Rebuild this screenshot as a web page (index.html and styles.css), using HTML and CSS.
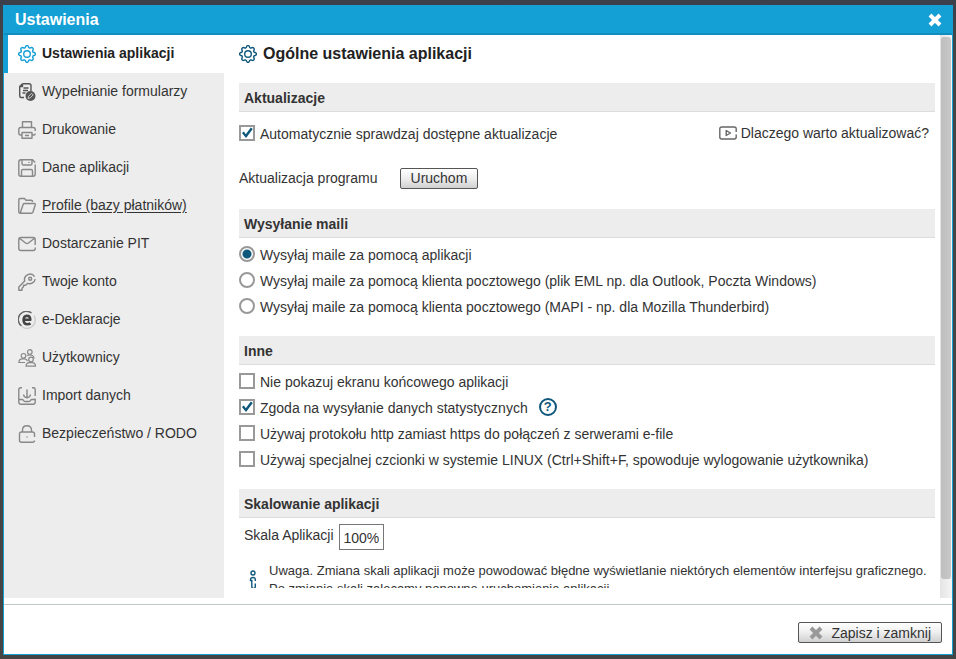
FILE: index.html
```
<!DOCTYPE html>
<html lang="pl">
<head>
  <meta charset="UTF-8">
  <title>Ustawienia</title>
  <link rel="stylesheet" href="styles.css">
</head>
<body>
  <div class="dialog">
    <header class="titlebar">
      <h1>Ustawienia</h1>
      <button class="close" type="button" aria-label="Zamknij">
        <svg class="cross" viewBox="0 0 14 14"><path d="M2 2l10 10M12 2L2 12"/></svg>
      </button>
    </header>

    <div class="main">
      <nav class="sidebar">
        <a href="#" class="active">
          <svg class="icon" viewBox="0 0 18 18"><path d="M7.3 2.7Q7.5.6 9 .6t1.7 2.1l1.2.5q1.7-1.2 2.8-.1t-.1 2.8l.5 1.4q2.3.2 2.3 1.7t-2.3 1.7l-.5 1.4q1.2 1.7.1 2.8t-2.8-.1l-1.2.5q-.2 2.1-1.7 2.1t-1.7-2.1l-1.2-.5q-1.7 1.2-2.8.1t.1-2.8l-.5-1.4Q.6 10.500.6 9t2.300-1.700l.5-1.400q-1.200-1.700-.1-2.800t2.800.1z"/><circle cx="9" cy="9" r="3.300"/></svg>
          Ustawienia aplikacji
        </a>
        <a href="#">
          <svg class="icon dark" viewBox="0 0 18 18"><path d="M4.500.7H11q2 0 2 2V8M4.500.7L1.700 3.500V13q0 1.500 1.500 1.500H6M4.500.7v2.800H1.700M5.500 5h5M5 7.500h5M4.500 10h3"/><circle class="solid" cx="12.500" cy="13" r="5"/><path class="light" d="M10 15.500l.6-2.200 3-3 1.600 1.600-3 3z"/></svg>
          Wypełnianie formularzy
        </a>
        <a href="#">
          <svg class="icon" viewBox="0 0 18 18"><path d="M4.500 6.500V.8h9v5.700M4 14H2.500Q.8 14 .8 12.300V8.500q0-2 2-2h12.400q2 0 2 2V10M17.200 12.500q0 1.500-1.500 1.500H14M4 11.500h10v5.700H4zM7 14.500h4"/></svg>
          Drukowanie
        </a>
        <a href="#">
          <svg class="icon" viewBox="0 0 18 18"><path d="M17.200 5.500V15q0 2.200-2.200 2.200H3Q.8 17.200.8 15V3Q.8.8 3 .8h11.500l2.700 2.700M4 1v3.500q0 1.500 1.500 1.500h7Q14 6 14 4.500V1M11 3v1M3.500 17v-5q0-1.500 1.500-1.500h8q1.500 0 1.500 1.500v5"/></svg>
          Dane aplikacji
        </a>
        <a href="#" class="underlined">
          <svg class="icon" viewBox="0 0 18 18"><path d="M14.500 5V4.500q0-1.300-1.300-1.300H8L6.500 1.500H2Q.8 1.500.8 2.800v12q0 1.500 1.500 1.500h11.200q1 0 1.400-1L17.200 8q.4-1.500-1-1.500H6.500q-1 0-1.400 1L2.300 16"/></svg>
          Profile (bazy płatników)
        </a>
        <a href="#">
          <svg class="icon" viewBox="0 0 18 18"><path d="M17.200 10V4.500q0-2-2-2H2.800q-2 0-2 2v9q0 2 2 2h12.400q2 0 2-2V12.500M1.500 3.200L7.500 8q1.500 1 3 0l6-4.800"/></svg>
          Dostarczanie PIT
        </a>
        <a href="#">
          <svg class="icon" viewBox="0 0 18 18"><path d="M16.600 3.600A5.500 5.500 0 0 0 6.700 8L.8 14v3.200H4v-2l1.500-1.500v-1.500h2l2.200-1.900a5.500 5.500 0 0 0 7.500-4.300"/><circle cx="12.200" cy="5.800" r="1.500"/></svg>
          Twoje konto
        </a>
        <a href="#">
          <svg class="icon edek" viewBox="0 0 18 18"><path class="ring" d="M16 4.500Q17.200 6.500 17.200 9a8.200 8.200 0 0 1-13 6.700"/><path d="M13.500 2A8.200 8.200 0 0 0 3.500 15"/><path class="letter" d="M5.800 8.800h6.500Q12.200 4.700 9 4.700 5.600 4.900 5.600 9q0 4.300 3.900 4.300 1.800 0 3-.9"/></svg>
          e-Deklaracje
        </a>
        <a href="#">
          <svg class="icon thin" viewBox="0 0 18 18"><circle cx="11.800" cy="3" r="2.300"/><circle cx="5.500" cy="6.800" r="2.300"/><circle cx="13" cy="10.500" r="2.300"/><path d="M9 6.500Q10 6 11.800 6q3.900 0 4.400 3.500M7 13.500H.8Q1 10 4.500 9.900h2Q8.800 10 9.500 12M8 17.200q.2-3.500 3.500-3.600h2.700q3.200.1 3.400 3.600z"/></svg>
          Użytkownicy
        </a>
        <a href="#">
          <svg class="icon" viewBox="0 0 18 18"><path d="M4 .8H2.500Q.8.8.8 2.500V15q0 2.200 2.200 2.200h12q2.200 0 2.200-2.200V11.500M14 .8h1.500q1.700 0 1.700 1.700V9M1 12.500h3q1 0 1.500 1t1.500 1h4q1 0 1.500-1t1.500-1h3M9 2.500v8M5.500 7.500Q6 10.700 9 10.700t3.500-3.200"/></svg>
          Import danych
        </a>
        <a href="#">
          <svg class="icon" viewBox="0 0 18 18"><path d="M4.500 7V5.200Q4.500.8 9 .8t4.500 4.400V7M16.500 12V9q0-2-2-2h-11q-2 0-2 2v6.200q0 2 2 2h11q2 0 2-1.700M8.500 12h1"/></svg>
          Bezpieczeństwo / RODO
        </a>
      </nav>

      <div class="pane">
        <h2>
          <svg class="icon" viewBox="0 0 18 18"><path d="M7.3 2.7Q7.5.6 9 .6t1.7 2.1l1.2.5q1.7-1.2 2.8-.1t-.1 2.8l.5 1.4q2.3.2 2.3 1.7t-2.3 1.7l-.5 1.4q1.2 1.7.1 2.8t-2.8-.1l-1.2.5q-.2 2.1-1.7 2.1t-1.7-2.1l-1.2-.5q-1.7 1.2-2.8.1t.1-2.8l-.5-1.4Q.6 10.500.6 9t2.300-1.700l.5-1.400q-1.200-1.700-.1-2.800t2.800.1z"/><circle cx="9" cy="9" r="3.300"/></svg>
          Ogólne ustawienia aplikacji
        </h2>

        <section class="updates">
          <h3>Aktualizacje</h3>
          <div class="row">
            <label><input type="checkbox" checked>Automatycznie sprawdzaj dostępne aktualizacje</label>
            <a href="#" class="why">
              <svg class="icon video" viewBox="0 0 18 18"><path d="M17.200 8V5q0-2-2-2H2.800q-2 0-2 2v8q0 2 2 2h12.400q2 0 2-2v-2.500M7.200 6.500v5l4.300-2.500z"/></svg>
              Dlaczego warto aktualizować?
            </a>
          </div>
          <div class="row run">
            <span>Aktualizacja programu</span>
            <button class="btn" type="button">Uruchom</button>
          </div>
        </section>

        <section>
          <h3>Wysyłanie maili</h3>
          <div class="row"><label><input type="radio" name="mail" checked>Wysyłaj maile za pomocą aplikacji</label></div>
          <div class="row"><label><input type="radio" name="mail">Wysyłaj maile za pomocą klienta pocztowego (plik EML np. dla Outlook, Poczta Windows)</label></div>
          <div class="row"><label><input type="radio" name="mail">Wysyłaj maile za pomocą klienta pocztowego (MAPI - np. dla Mozilla Thunderbird)</label></div>
        </section>

        <section>
          <h3>Inne</h3>
          <div class="row"><label><input type="checkbox">Nie pokazuj ekranu końcowego aplikacji</label></div>
          <div class="row">
            <label><input type="checkbox" checked>Zgoda na wysyłanie danych statystycznych</label>
            <button class="help" type="button">?</button>
          </div>
          <div class="row"><label><input type="checkbox">Używaj protokołu http zamiast https do połączeń z serwerami e-file</label></div>
          <div class="row"><label><input type="checkbox">Używaj specjalnej czcionki w systemie LINUX (Ctrl+Shift+F, spowoduje wylogowanie użytkownika)</label></div>
        </section>

        <section>
          <h3>Skalowanie aplikacji</h3>
          <div class="scale">
            <label for="scale">Skala Aplikacji</label>
            <select id="scale">
              <option>100%</option>
            </select>
          </div>
          <div class="note">
            <svg class="info" viewBox="0 0 8 20"><circle cx="4" cy="3" r="2"/><path d="M6.300 11V9.500Q6.300 7.500 4 7.500T1.500 9.500v1h1.300v6q0 2 1.700 2t1.800-2v-3"/></svg>
            <p>Uwaga. Zmiana skali aplikacji może powodować błędne wyświetlanie niektórych elementów interfejsu graficznego.<br>Po zmianie skali zalecamy ponowne uruchomienie aplikacji.</p>
          </div>
        </section>
      </div>

      <div class="scrollbar"><div class="thumb"></div></div>
    </div>

    <footer class="footer">
      <button class="btn save" type="button">
        <svg class="cross" viewBox="0 0 14 14"><path d="M2 2l10 10M12 2L2 12"/></svg>
        Zapisz i zamknij
      </button>
    </footer>
  </div>
</body>
</html>
```
FILE: styles.css
```
* {
  box-sizing: border-box;
}

body {
  margin: 0;
  height: 100vh;
  padding: 5px 3px 4px;
  background: linear-gradient(#3c404b, #444 40px);
  font-family: "Liberation Sans", Arial, sans-serif;
  font-size: 14px;
  line-height: 18px;
  color: #333;
}

h1, h2, h3, p {
  margin: 0;
}

a {
  color: inherit;
  text-decoration: none;
}

.dialog {
  display: flex;
  flex-direction: column;
  height: 100%;
  background: #fff;
  border: 1px solid #149fd5;
  border-top: none;
}

/* title bar */
.titlebar {
  display: flex;
  align-items: center;
  justify-content: space-between;
  height: 30px;
  flex: none;
  padding: 2px 10px 0 11px;
  background: #149fd5;
  border-bottom: 2px solid #118cbe;
  color: #fff;
}

.titlebar h1 {
  font-size: 16px;
}

.close {
  padding: 0;
  border: none;
  background: none;
  line-height: 0;
  color: #fff;
}

.cross {
  width: 14px;
  height: 14px;
  fill: none;
  stroke: currentColor;
  stroke-width: 4;
}

.main {
  display: flex;
  flex: 1;
  min-height: 0;
}

/* icons */
.icon {
  flex: none;
  width: 18px;
  height: 18px;
  fill: none;
  stroke: #888;
  stroke-width: 1.4;
  stroke-linejoin: round;
}

.icon.thin {
  stroke-width: 1.2;
}

.icon.dark {
  stroke: #555;
}

.icon .solid {
  fill: #555;
  stroke: none;
}

.icon .light {
  stroke: #ccc;
  stroke-width: 1;
}

.edek {
  stroke: #666;
}

.edek .ring {
  stroke: #ccc;
}

.edek .letter {
  stroke: #444;
  stroke-width: 2.6;
}

/* sidebar */
.sidebar {
  width: 220px;
  flex: none;
  background: #ededed;
}

.sidebar a {
  display: flex;
  align-items: center;
  gap: 6px;
  height: 38px;
  padding: 0 0 2px 14px;
}

.sidebar .icon {
  margin-top: 2px;
}

.sidebar .active {
  padding-left: 10px;
  border-left: 4px solid #149fd5;
  background: #fff;
  font-weight: bold;
  color: #222;
}

.sidebar .active .icon {
  stroke: #149fd5;
}

.sidebar .underlined {
  text-decoration: underline;
  text-underline-offset: 2px;
}

/* settings */
.pane {
  flex: 1;
  min-width: 0;
  overflow: hidden;
  margin: 0 5px 10px 15px;
}

.pane h2 {
  display: flex;
  align-items: center;
  gap: 6px;
  height: 38px;
  margin-bottom: 10px;
  font-size: 16px;
  color: #222;
}

.pane h2 .icon {
  stroke: #0f587c;
}

section {
  margin-bottom: 17px;
}

h3 {
  height: 29px;
  margin-bottom: 3px;
  padding-left: 5px;
  border-bottom: 1px solid #ddd;
  background: #ededed;
  font-size: 14px;
  line-height: 30px;
}

.row {
  display: flex;
  align-items: center;
  height: 26px;
}

.row label {
  display: flex;
  align-items: flex-start;
  gap: 5px;
  height: 16px;
  line-height: 18px;
}

.updates .row {
  height: 36px;
}

.updates .run {
  height: 54px;
  gap: 22px;
}

.updates {
  margin-bottom: 4px;
}

.why {
  display: flex;
  align-items: center;
  gap: 4px;
  margin-left: auto;
  padding-right: 6px;
}

.video {
  stroke: #666;
}

input {
  appearance: none;
  flex: none;
  width: 16px;
  height: 16px;
  margin: 0;
  border: 2px solid #999;
  background: #fff;
}

input[type="radio"] {
  border-radius: 50%;
}

input[type="radio"]:checked {
  background: radial-gradient(circle, #0f587c 4px, #fff 5px);
}

input[type="checkbox"]:checked::before {
  content: "";
  display: block;
  width: 12px;
  height: 12px;
  background: #0f587c;
  clip-path: polygon(8% 50%, 24% 38%, 40% 60%, 82% 4%, 98% 16%, 42% 92%);
}

.help {
  width: 18px;
  height: 18px;
  margin-left: 11px;
  padding: 0;
  border: 2px solid #0f587c;
  border-radius: 50%;
  background: none;
  font: bold 13px/14px "Liberation Sans", Arial, sans-serif;
  color: #0f587c;
}

.btn {
  height: 21px;
  padding: 0 10px;
  border: 1px solid #555;
  border-radius: 2px;
  background: linear-gradient(#fff, #eee 50%, #d0d0d0);
  font: 14px/18px "Liberation Sans", Arial, sans-serif;
  color: #333;
}

.scale {
  display: flex;
  align-items: flex-start;
  gap: 5px;
  padding: 3px 0 0 5px;
}

.scale label {
  padding-top: 2px;
}

.scale select {
  appearance: none;
  width: 45px;
  height: 26px;
  padding: 2px 4px 0;
  border: 1px solid #777;
  border-radius: 0;
  background: #fff;
  font: inherit;
  color: #333;
}

.note {
  display: flex;
  gap: 12px;
  margin-top: 12px;
  padding-left: 10px;
  font-size: 13px;
  white-space: nowrap;
}

.info {
  flex: none;
  width: 8px;
  height: 20px;
  margin-top: 8px;
  fill: none;
  stroke: #0f587c;
  stroke-width: 1.4;
}

.scrollbar {
  width: 12px;
  flex: none;
  padding: 2px 1px 19px;
  background: linear-gradient(90deg, #e4e4e4, #f5f5f5);
}

.thumb {
  height: 100%;
  border-radius: 3px;
  background: linear-gradient(90deg, #bebebe, #c8c8c8);
}

.footer {
  display: flex;
  align-items: center;
  justify-content: flex-end;
  flex: none;
  height: 50px;
  margin-top: 6px;
  padding: 6px 10px 0;
  border-top: 1px solid #c0c8c8;
}

.save {
  display: flex;
  align-items: center;
  gap: 8px;
}

.save .cross {
  stroke: #999;
}
```
